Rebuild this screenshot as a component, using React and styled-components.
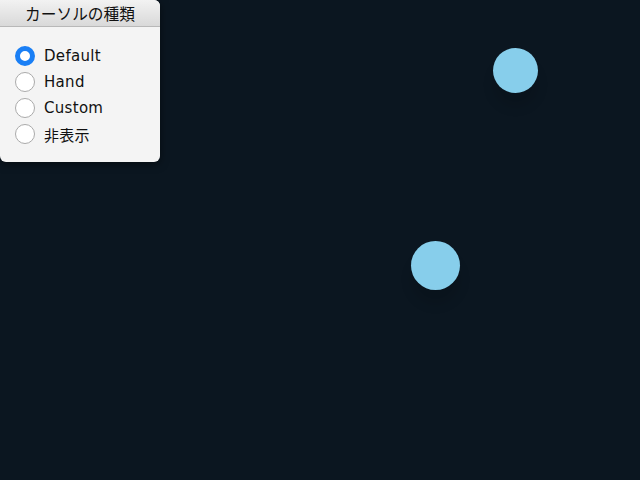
import React, { useState } from "react";
import styled, { createGlobalStyle } from "styled-components";

const Global = createGlobalStyle`
  html, body { margin: 0; padding: 0; background: #0b1620; }
  #root { width: 640px; height: 480px; }
`;

const Stage = styled.div`
  position: relative;
  width: 640px;
  height: 480px;
  background: #0b1620;
  overflow: hidden;
  font-family: "DejaVu Sans", "Noto Sans CJK JP", sans-serif;
`;

const Panel = styled.div`
  width: 160px;
  height: 162px;
  background: #f4f4f4;
  border-radius: 0 6px 6px 6px;
  box-shadow: 0 2px 8px rgba(0, 0, 0, 0.5);
  display: flex;
  flex-direction: column;
  overflow: hidden;
`;

const Header = styled.div`
  height: 27px;
  box-sizing: border-box;
  border-bottom: 1px solid #b8b8b8;
  background: linear-gradient(#f2f2f2, #d9d9d9);
  color: #111;
  font-family: "Noto Sans CJK JP", sans-serif;
  font-size: 15.7px;
  display: flex;
  align-items: center;
  justify-content: center;
`;

const List = styled.div`
  display: flex;
  flex-direction: column;
  padding: 19px 0 0 15px;
  gap: 6px;
`;

const Row = styled.label`
  display: flex;
  align-items: center;
  gap: 9px;
  height: 20px;
  font-size: 15px;
  letter-spacing: 0.3px;
  color: #111;
  cursor: pointer;
`;

const Radio = styled.span`
  width: 20px;
  height: 20px;
  box-sizing: border-box;
  border-radius: 50%;
  border: ${(p) => (p.$on ? "5.5px solid #1a7ff5" : "1.5px solid #aaa")};
  background: #fff;
  flex: none;
`;

const Ball = styled.div`
  position: absolute;
  border-radius: 50%;
  background: #87ceeb;
  box-shadow: 0 14px 12px rgba(0, 0, 0, 0.12);
`;

const options = ["Default", "Hand", "Custom", "非表示"];

export default function App() {
  const [sel, setSel] = useState(0);
  return (
    <Stage>
      <Global />
      <Panel>
        <Header>カーソルの種類</Header>
        <List>
          {options.map((o, i) => (
            <Row key={o} onClick={() => setSel(i)}>
              <Radio $on={sel === i} />
              {o}
            </Row>
          ))}
        </List>
      </Panel>
      <Ball style={{ left: 493, top: 48, width: 45, height: 45 }} />
      <Ball style={{ left: 411, top: 241, width: 49, height: 49 }} />
    </Stage>
  );
}
